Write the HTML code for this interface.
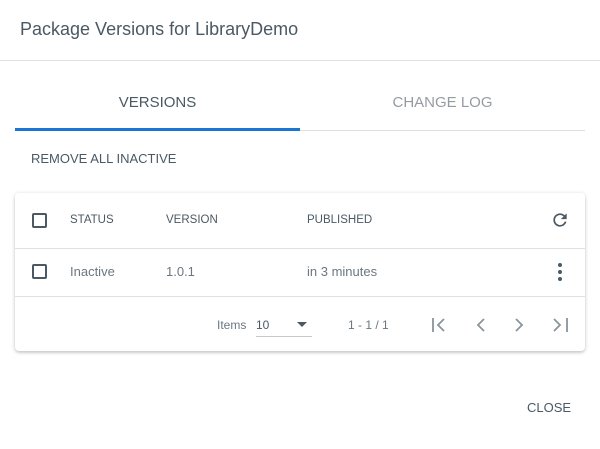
<!DOCTYPE html>
<html><head><style>
*{margin:0;padding:0;box-sizing:border-box}
body{width:600px;height:449px;background:#fff;font-family:"Liberation Sans",sans-serif;color:#4a5964;position:relative;overflow:hidden}
.a{position:absolute;white-space:nowrap}
.cb{position:absolute;width:15px;height:15px;border:2px solid #4a5964;border-radius:2px}
</style></head><body>
<div class="a" style="left:20px;top:19px;font-size:18px;">Package Versions for LibraryDemo</div>
<div class="a" style="left:0;top:60px;width:600px;height:1px;background:#e0e0e0"></div>
<div class="a" style="left:15px;top:94px;width:285px;text-align:center;font-size:15px;">VERSIONS</div>
<div class="a" style="left:300px;top:94px;width:285px;text-align:center;font-size:15px;color:#959ca1">CHANGE LOG</div>
<div class="a" style="left:15px;top:128px;width:285px;height:3px;background:#1976d2"></div>
<div class="a" style="left:300px;top:130px;width:285px;height:1px;background:#e0e0e0"></div>
<div class="a" style="left:31px;top:151px;font-size:13px;">REMOVE ALL INACTIVE</div>
<div class="a" style="left:15px;top:193px;width:570px;height:158px;border-radius:4px;box-shadow:0 1px 4px rgba(0,0,0,.2),0 2px 2px rgba(0,0,0,.08)"></div>
<div class="cb" style="left:32px;top:213px"></div>
<div class="a" style="left:70px;top:214px;font-size:11.5px;">STATUS</div>
<div class="a" style="left:166px;top:214px;font-size:11.5px;">VERSION</div>
<div class="a" style="left:307px;top:214px;font-size:11.5px;">PUBLISHED</div>
<svg class="a" style="left:550px;top:210px" width="20" height="20" viewBox="0 0 24 24"><path fill="#4a5964" d="M17.65 6.35A7.96 7.96 0 0 0 12 4a8 8 0 1 0 7.730 10h-2.08A6 6 0 1 1 12 6c1.66 0 3.14.69 4.22 1.78L13 11h7V4l-2.35 2.35z"/></svg>
<div class="a" style="left:15px;top:248px;width:570px;height:1px;background:#e0e0e0"></div>
<div class="cb" style="left:32px;top:264px"></div>
<div class="a" style="left:70px;top:264px;font-size:13px;color:#6b7780">Inactive</div>
<div class="a" style="left:166px;top:264px;font-size:13px;color:#6b7780">1.0.1</div>
<div class="a" style="left:307px;top:264px;font-size:13px;color:#6b7780">in 3 minutes</div>
<svg class="a" style="left:554px;top:262px" width="12" height="20" viewBox="0 0 12 20"><circle cx="6" cy="3" r="2" fill="#4a5964"/><circle cx="6" cy="10" r="2" fill="#4a5964"/><circle cx="6" cy="17" r="2" fill="#4a5964"/></svg>
<div class="a" style="left:15px;top:296px;width:570px;height:1px;background:#e0e0e0"></div>
<div class="a" style="left:217px;top:318px;font-size:12px;color:#6b7780">Items</div>
<div class="a" style="left:256px;top:318px;font-size:12px;color:#4a5964">10</div>
<svg class="a" style="left:297px;top:322px" width="10" height="6"><path d="M0 0h10L5 5z" fill="#4a5964"/></svg>
<div class="a" style="left:256px;top:336px;width:56px;height:1px;background:#c8c8c8"></div>
<div class="a" style="left:348px;top:318px;font-size:12px;color:#6b7780">1 - 1 / 1</div>
<svg class="a" style="left:430px;top:316px" width="140" height="18" viewBox="0 0 140 18" fill="none" stroke="#8a949b" stroke-width="1.8">
<path d="M3 2v14M14 3l-6 6 6 6"/>
<path d="M54 3l-6 6 6 6"/>
<path d="M86 3l6 6-6 6"/>
<path d="M124 3l6 6-6 6M137 2v14"/>
</svg>
<div class="a" style="left:527px;top:400px;font-size:13px;">CLOSE</div>
</body></html>
